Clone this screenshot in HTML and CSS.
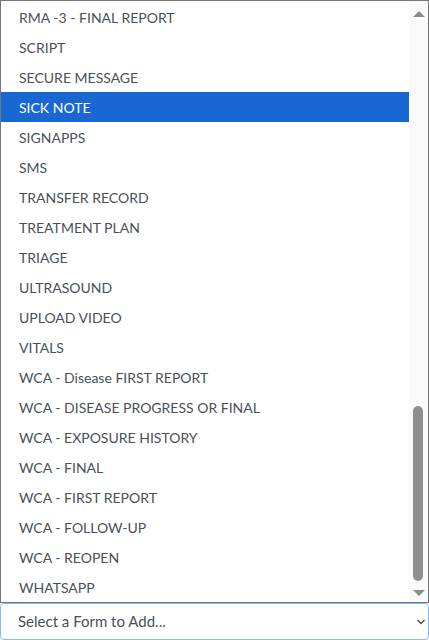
FILE: index.html
```html
<!DOCTYPE html>
<html>
<head>
<meta charset="utf-8">
<link rel="stylesheet" href="styles.css">
</head>
<body>
<div class="wrap">
  <div class="listbox">
    <ul class="options">
      <li>RMA -3 - FINAL REPORT</li>
      <li>SCRIPT</li>
      <li>SECURE MESSAGE</li>
      <li class="selected">SICK NOTE</li>
      <li>SIGNAPPS</li>
      <li>SMS</li>
      <li>TRANSFER RECORD</li>
      <li>TREATMENT PLAN</li>
      <li>TRIAGE</li>
      <li>ULTRASOUND</li>
      <li>UPLOAD VIDEO</li>
      <li>VITALS</li>
      <li>WCA - Disease FIRST REPORT</li>
      <li>WCA - DISEASE PROGRESS OR FINAL</li>
      <li>WCA - EXPOSURE HISTORY</li>
      <li>WCA - FINAL</li>
      <li>WCA - FIRST REPORT</li>
      <li>WCA - FOLLOW-UP</li>
      <li>WCA - REOPEN</li>
      <li>WHATSAPP</li>
    </ul>
    <div class="scrollbar">
      <div class="arrow up"></div>
      <div class="track"><div class="thumb"></div></div>
      <div class="arrow down"></div>
    </div>
  </div>
  <div class="select">
    <span class="placeholder">Select a Form to Add...</span>
    <svg class="chev" width="10" height="6" viewBox="0 0 10 6"><path d="M1.5 1 L5 4.5 L8.5 1" fill="none" stroke="#495057" stroke-width="1.5"/></svg>
  </div>
</div>
</body>
</html>
```
FILE: styles.css
```css
html, body { margin: 0; padding: 0; background: #fff; }
body { font-family: Lato, "Liberation Sans", sans-serif; font-size: 14px; color: #495057; }
.wrap { width: 429px; height: 640px; display: flex; flex-direction: column; }
.listbox { height: 603px; box-sizing: border-box; border: 1px solid #767676; display: flex; overflow: hidden; }
.options { list-style: none; margin: 0; padding: 0; flex: 1; margin-top: 1px; }
.options li { height: 30px; box-sizing: border-box; padding-top: 2px; line-height: 28px; padding-left: 18px; white-space: nowrap; }
.options li.selected { background: #1967d2; color: #fff; }
.scrollbar { width: 19px; background: #fafafa; display: flex; flex-direction: column; }
.arrow { height: 17px; display: flex; align-items: center; justify-content: center; }
.arrow.up::before { content: ""; border-left: 6px solid transparent; border-right: 6px solid transparent; border-bottom: 6px solid #8a8a8a; margin-top: 8px; }
.arrow.down::before { content: ""; border-left: 6px solid transparent; border-right: 6px solid transparent; border-top: 6px solid #8a8a8a; margin-bottom: 2px; }
.track { flex: 1; display: flex; flex-direction: column; justify-content: flex-end; padding: 0 5px 4px 4px; }
.thumb { height: 175px; background: #8f8f8f; border-radius: 5px; }
.select { height: 37px; box-sizing: border-box; border: 1px solid #80bdff; border-radius: 4px; display: flex; align-items: center; justify-content: space-between; padding: 0 2px 0 17px; }
.placeholder { font-size: 15px; color: #495057; margin-top: -1px; }
.chev { margin-top: 1px; }
```
